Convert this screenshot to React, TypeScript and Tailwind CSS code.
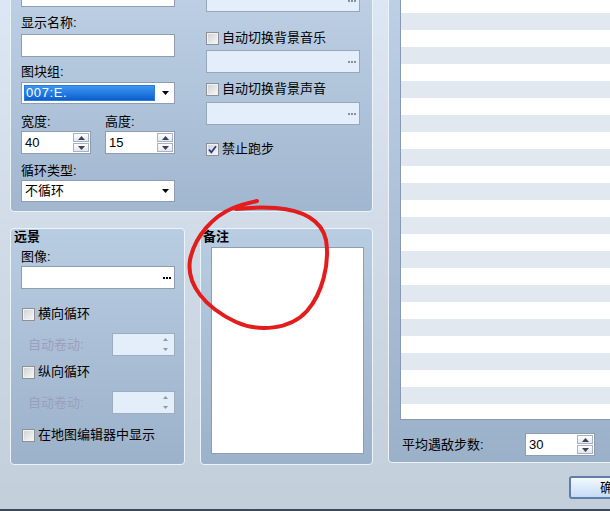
import React from "react";
import clsx from "clsx";

function Tri({ up, color = "#363c4a", w = 7, h = 4 }: { up?: boolean; color?: string; w?: number; h?: number }) {
  return (
    <svg width={w} height={h} viewBox={`0 0 ${w} ${h}`} className="block">
      <polygon points={up ? `0,${h} ${w / 2},0 ${w},${h}` : `0,0 ${w},0 ${w / 2},${h}`} fill={color} />
    </svg>
  );
}

function Label({ children, className }: { children: React.ReactNode; className?: string }) {
  return <div className={clsx("h-[16px] leading-[16px] whitespace-nowrap", className)}>{children}</div>;
}

function Dots({ color }: { color: string }) {
  return (
    <div className="flex gap-[1px]">
      {[0, 1, 2].map((i) => (
        <div key={i} className={clsx("h-[2px] w-[2px]", color)} />
      ))}
    </div>
  );
}

function Field({ disabled, dots, className }: { disabled?: boolean; dots?: boolean; className?: string }) {
  return (
    <div
      className={clsx(
        "flex h-[23px] w-[154px] shrink-0 items-center justify-end border pr-[3px]",
        disabled ? "border-[#98a7ba] bg-[#e4eefa]" : "border-[#8e9db1] bg-white",
        className
      )}
    >
      {dots && <Dots color={disabled ? "bg-[#8391a7]" : "bg-black"} />}
    </div>
  );
}

function Select({ children, selected, className }: { children: React.ReactNode; selected?: boolean; className?: string }) {
  return (
    <div className={clsx("flex h-[22px] w-[154px] items-center border border-[#8e9db1] bg-white pl-[2px] pr-[5px]", className)}>
      {selected ? (
        <div className="flex h-[16px] w-[131px] items-center border border-[#2a7ae0] bg-gradient-to-b from-[#3d96f2] to-[#0a5fcf] pl-[1px] text-[13px] tracking-[0.6px] text-white">
          {children}
        </div>
      ) : (
        <div className="pl-[1px] leading-[20px]">{children}</div>
      )}
      <div className="ml-auto">
        <Tri w={7} h={4} color="#000" />
      </div>
    </div>
  );
}

function SpinBtn({ up }: { up?: boolean }) {
  return (
    <div className="flex h-[9px] w-[16px] items-center justify-center border border-[#a7b3c2] bg-gradient-to-b from-[#fdfdfe] to-[#e3e8ee]">
      <Tri up={up} w={7} h={4} color="#3d4352" />
    </div>
  );
}

function Spinner({ value, className }: { value: string; className?: string }) {
  return (
    <div className={clsx("flex h-[23px] w-[70px] border border-[#8e9db1] bg-white", className)}>
      <div className="flex-1 pl-[3px] leading-[21px]">{value}</div>
      <div className="flex flex-col gap-[1px] py-[1px] pr-[1px]">
        <SpinBtn up />
        <SpinBtn />
      </div>
    </div>
  );
}

function DisabledSpinner() {
  return (
    <div className="flex h-[23px] w-[63px] items-center justify-end border border-[#9eacbf] bg-[#e4eefa] pr-[6px]">
      <div className="flex flex-col gap-[7px]">
        <Tri up w={5} h={3} color="#8f98ad" />
        <Tri w={5} h={3} color="#8f98ad" />
      </div>
    </div>
  );
}

function CheckRow({ label, checked, className }: { label: string; checked?: boolean; className?: string }) {
  return (
    <div className={clsx("flex h-[16px] items-center gap-[3px] whitespace-nowrap", className)}>
      <div className="flex h-[13px] w-[13px] shrink-0 items-center justify-center border border-[#8e9093] bg-gradient-to-br from-[#cdd0d4] to-[#f9f9f9] shadow-[inset_0_0_0_1px_#f2f2f2]">
        {checked && (
          <svg width="11" height="11" viewBox="0 0 11 11" className="block">
            <path d="M2 5.5 L4.3 8.3 L9 2.2" stroke="#26398c" strokeWidth="1.8" fill="none" />
          </svg>
        )}
      </div>
      <span className="leading-[16px]">{label}</span>
    </div>
  );
}

const group = "rounded-[4px] border border-[#edf3fa]";

export default function App() {
  const rows = Array.from({ length: 27 });
  return (
    <div className="relative flex h-[511px] w-[610px] flex-col overflow-hidden bg-gradient-to-b from-[#dce7f3] to-[#c3cedb] font-['Liberation_Sans','Noto_Sans_CJK_SC',sans-serif] text-[13px] text-black">
      <div className="flex flex-1 items-start pl-[10px]">
        {/* left side */}
        <div className="flex w-[363px] shrink-0 flex-col">
          <div className={clsx(group, "-mt-[40px] flex h-[252px] bg-gradient-to-b from-[#c1d3e7] to-[#a1b7cf] pl-[10px]")}>
            <div className="flex w-[154px] shrink-0 flex-col pt-[23px]">
              <Field />
              <Label className="mt-[8px]">显示名称:</Label>
              <Field className="mt-[3px]" />
              <Label className="mt-[7px]">图块组:</Label>
              <Select className="mt-[2px]" selected>
                007:E.
              </Select>
              <div className="mt-[10px] flex gap-[14px]">
                <div className="flex flex-col">
                  <Label>宽度:</Label>
                  <Spinner className="mt-[1px]" value="40" />
                </div>
                <div className="flex flex-col">
                  <Label>高度:</Label>
                  <Spinner className="mt-[1px]" value="15" />
                </div>
              </div>
              <Label className="mt-[9px]">循环类型:</Label>
              <Select className="mt-[1px]">不循环</Select>
            </div>
            <div className="ml-[31px] flex w-[154px] shrink-0 flex-col pt-[28px]">
              <Field disabled dots />
              <CheckRow className="mt-[18px]" label="自动切换背景音乐" />
              <Field disabled dots className="mt-[4px]" />
              <CheckRow className="mt-[8px]" label="自动切换背景声音" />
              <Field disabled dots className="mt-[5px]" />
              <CheckRow className="mt-[16px]" label="禁止跑步" checked />
            </div>
          </div>

          <div className="mt-[16px] flex h-[237px] gap-[15px]">
            <div className={clsx(group, "flex w-[175px] shrink-0 flex-col bg-gradient-to-b from-[#b9cde2] to-[#9cb2ca]")}>
              <Label className="pl-[3px] font-bold">远景</Label>
              <Label className="mt-[4px] pl-[10px]">图像:</Label>
              <Field dots className="ml-[10px] mt-[1px]" />
              <CheckRow className="ml-[11px] mt-[17px]" label="横向循环" />
              <div className="ml-[17px] mt-[11px] flex items-center">
                <span className="w-[84px] text-[#9c9ebf]">自动卷动:</span>
                <DisabledSpinner />
              </div>
              <CheckRow className="ml-[11px] mt-[8px]" label="纵向循环" />
              <div className="ml-[17px] mt-[11px] flex items-center">
                <span className="w-[84px] text-[#9c9ebf]">自动卷动:</span>
                <DisabledSpinner />
              </div>
              <CheckRow className="ml-[11px] mt-[13px]" label="在地图编辑器中显示" />
            </div>

            <div className={clsx(group, "flex w-[173px] shrink-0 flex-col bg-gradient-to-b from-[#b9cde2] to-[#9cb2ca]")}>
              <Label className="pl-[2px] font-bold">备注</Label>
              <div className="ml-[10px] mt-[2px] h-[207px] w-[153px] border border-[#8e9db1] bg-white" />
            </div>
          </div>
        </div>

        {/* right side */}
        <div className="ml-[15px] flex w-[250px] shrink-0 flex-col">
          <div className={clsx(group, "-mt-[40px] flex h-[503px] flex-col bg-gradient-to-b from-[#bfd2e6] to-[#9bb1ca]")}>
            <div className="ml-[11px] mt-[17px] h-[442px] overflow-hidden border border-[#8699b0] bg-white">
              {rows.map((_, i) => (
                <div key={i} className={clsx("h-[17px]", i % 2 === 0 ? "bg-[#e2e8f0]" : "bg-white")} />
              ))}
            </div>
            <div className="ml-[13px] mt-[13px] flex h-[23px] items-center">
              <span className="w-[123px] whitespace-nowrap">平均遇敌步数:</span>
              <Spinner value="30" />
            </div>
          </div>
          <button className="ml-[181px] mt-[13px] h-[23px] w-[88px] shrink-0 rounded-[3px] border-2 border-[#5f7fa9] bg-gradient-to-b from-[#f3f8fe] to-[#c6dcf5] text-[13px] leading-[19px]">
            确定
          </button>
        </div>
      </div>
      <div className="h-[2px] shrink-0 bg-[#3a4858]" />

      <svg className="pointer-events-none absolute left-0 top-0" width="610" height="511" viewBox="0 0 610 511">
        <path
          d="M257 201 C248 203 240 205 233 208 C214 216 195 235 190 260 C186 285 206 308 236 322 C258 332 290 330 307 311 C322 294 330 264 326 240 C322 220 302 210 276 208 C258 207 245 208 236 209"
          stroke="#e31c1c"
          strokeWidth="4"
          fill="none"
          strokeLinecap="round"
          strokeLinejoin="round"
        />
      </svg>
    </div>
  );
}
